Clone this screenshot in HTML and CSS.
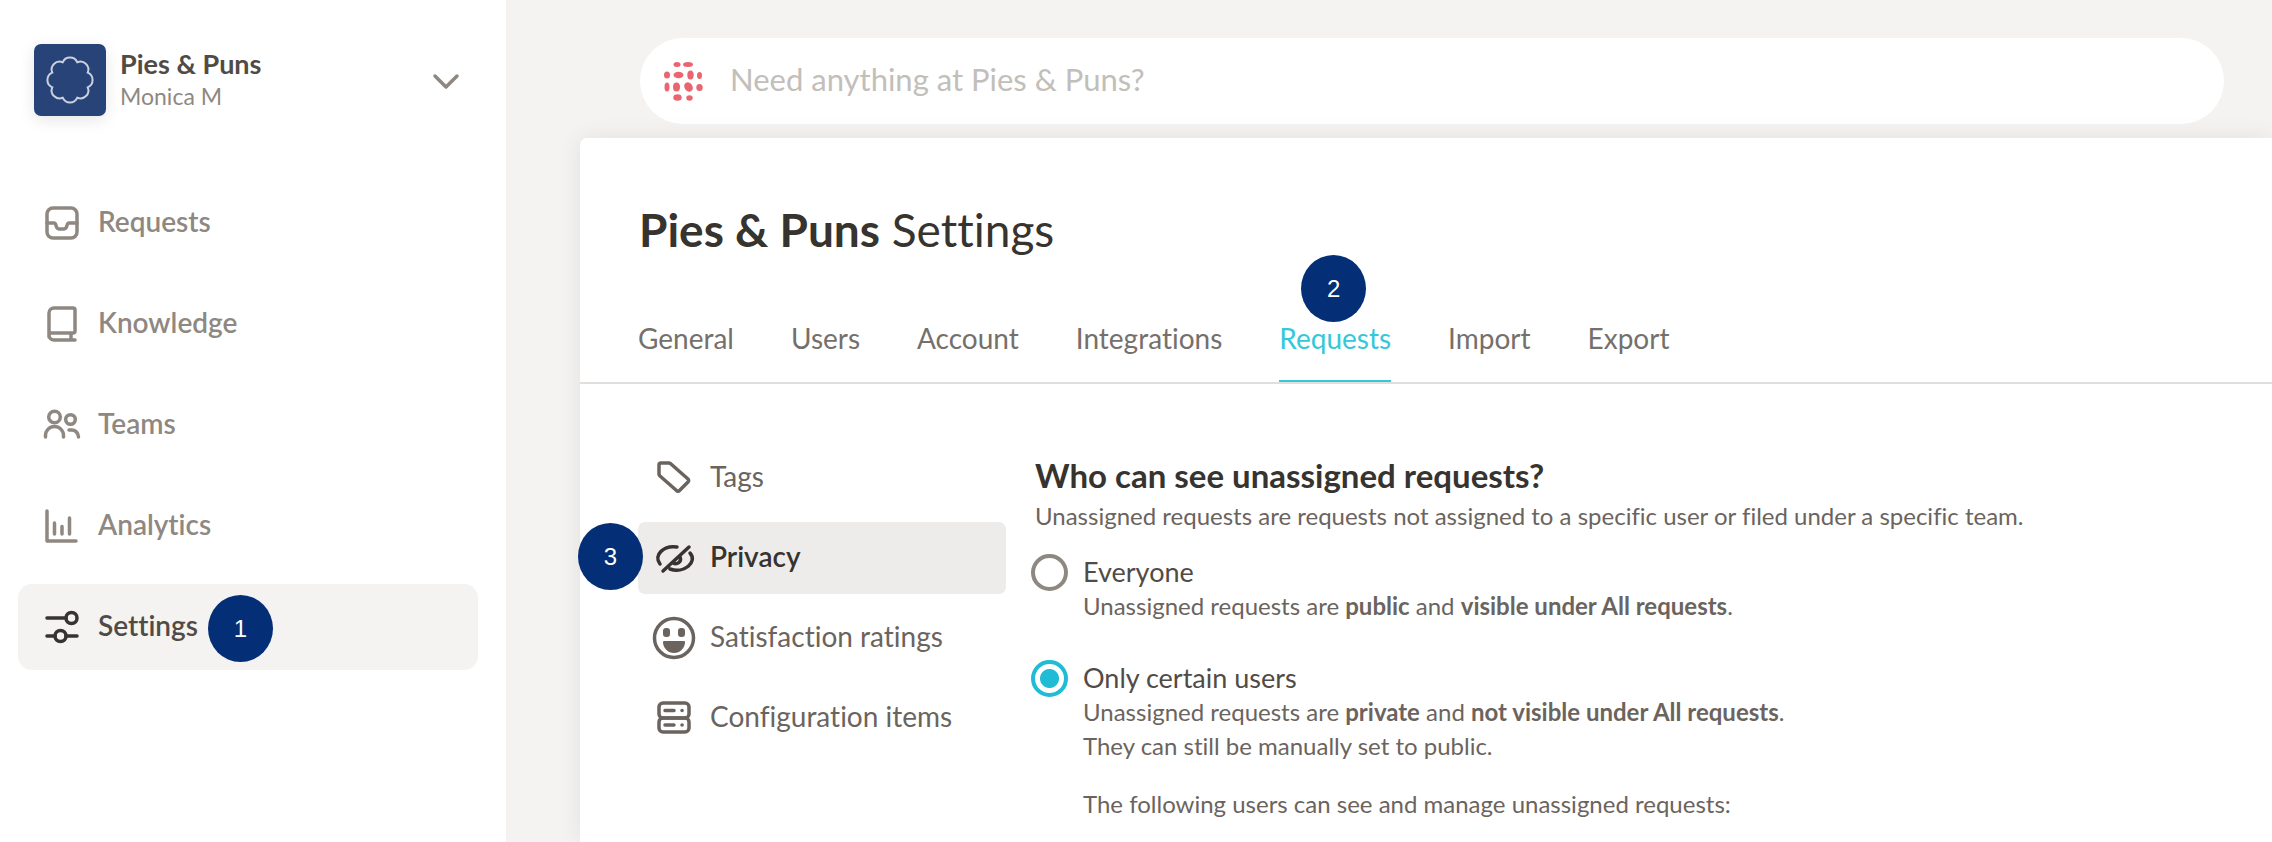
FILE: index.html
```html
<!DOCTYPE html>
<html lang="en">
<head>
  <meta charset="UTF-8">
  <title>Pies &amp; Puns Settings</title>
  <link rel="stylesheet" href="styles.css">
</head>
<body>
  <div class="app">
    <aside class="sidebar">
      <button class="account" type="button">
        <svg class="account-logo" viewBox="0 0 72 72" fill="none" stroke="#c9d0de" stroke-width="2">
          <path d="M28.7 18.3a7.9 7.9 0 0 1 14.6 0a7.9 7.9 0 0 1 10.4 10.4a7.9 7.9 0 0 1 0 14.6a7.9 7.9 0 0 1-10.4 10.4a7.9 7.9 0 0 1-14.6 0a7.9 7.9 0 0 1-10.4-10.4a7.9 7.9 0 0 1 0-14.6a7.9 7.9 0 0 1 10.4-10.4z"/>
        </svg>
        <span class="account-text">
          <span class="account-name">Pies &amp; Puns</span>
          <span class="account-user">Monica M</span>
        </span>
        <svg class="chevron" viewBox="0 0 28 18" fill="none" stroke="#8f8881" stroke-width="3.500" stroke-linecap="round" stroke-linejoin="round">
          <path d="M3 3l11 11L25 3"/>
        </svg>
      </button>

      <nav class="main-nav">
        <a class="nav-item" href="#">
          <svg class="nav-icon" viewBox="0 0 40 40">
            <rect x="5" y="5" width="30" height="30" rx="6"/>
            <path d="M5 20h7c3 0 1 6 5 6h5c4 0 2-6 5-6h8"/>
          </svg>
          <span class="nav-label">Requests</span>
        </a>
        <a class="nav-item" href="#">
          <svg class="nav-icon" viewBox="0 0 40 40">
            <path d="M7 33V9a5 5 0 0 1 5-5h19a2 2 0 0 1 2 2v21a2 2 0 0 1-2 2H9a2 2 0 0 0-2 2a5 5 0 0 0 5 5h21M29 29v7"/>
          </svg>
          <span class="nav-label">Knowledge</span>
        </a>
        <a class="nav-item" href="#">
          <svg class="nav-icon" viewBox="0 0 40 40">
            <circle cx="12.500" cy="12" r="5.800"/>
            <circle cx="28.500" cy="14.500" r="4.800"/>
            <path d="M3.500 32v-1.500a9 9 0 0 1 18 0V32M27 25h2a7 7 0 0 1 7.500 7"/>
          </svg>
          <span class="nav-label">Teams</span>
        </a>
        <a class="nav-item" href="#">
          <svg class="nav-icon" viewBox="0 0 40 40">
            <path d="M5 5v30h29M12.500 17v11M20 20.500V28M27.500 12v16"/>
          </svg>
          <span class="nav-label">Analytics</span>
        </a>
        <a class="nav-item active" href="#">
          <svg class="nav-icon" viewBox="0 0 40 40">
            <circle cx="29.500" cy="11" r="5.500"/>
            <circle cx="18.500" cy="29" r="5.500"/>
            <path d="M5 11h19M5 29h8M24 29h11"/>
          </svg>
          <span class="nav-label">Settings</span>
          <span class="badge badge-nav">1</span>
        </a>
      </nav>
    </aside>

    <main class="main">
      <label class="search">
        <svg class="search-logo" viewBox="0 0 40 40" fill="#e9656f">
          <ellipse cx="14" cy="3.500" rx="3.500" ry="2.500"/>
          <ellipse cx="25" cy="3.500" rx="5" ry="2.500"/>
          <ellipse cx="4" cy="14" rx="3" ry="3.500"/>
          <ellipse cx="15.500" cy="14" rx="5" ry="3.200"/>
          <ellipse cx="27.500" cy="14" rx="3.200" ry="4.500"/>
          <ellipse cx="36.500" cy="14.500" rx="2.500" ry="3.500"/>
          <ellipse cx="4" cy="26" rx="2.500" ry="4.500"/>
          <ellipse cx="13.500" cy="26" rx="3.500" ry="4.500"/>
          <ellipse cx="25.500" cy="26" rx="4" ry="5" transform="rotate(-35 25.500 26)"/>
          <ellipse cx="36.500" cy="26.500" rx="3.200" ry="3.500"/>
          <ellipse cx="14.500" cy="36.500" rx="4.200" ry="3.200"/>
          <ellipse cx="26.500" cy="37" rx="3.200" ry="2.800"/>
        </svg>
        <input class="search-input" type="text" placeholder="Need anything at Pies &amp; Puns?" aria-label="Search">
      </label>

      <section class="panel">
        <h1 class="title"><strong>Pies &amp; Puns</strong> Settings</h1>

        <nav class="tabs">
          <a class="tab" href="#">General</a>
          <a class="tab" href="#">Users</a>
          <a class="tab" href="#">Account</a>
          <a class="tab" href="#">Integrations</a>
          <a class="tab active" href="#">Requests<span class="badge badge-tab">2</span></a>
          <a class="tab" href="#">Import</a>
          <a class="tab" href="#">Export</a>
        </nav>

        <div class="panel-body">
          <nav class="sub-nav">
            <a class="sub-item" href="#">
              <svg class="sub-icon" viewBox="0 0 44 44">
                <path d="M9 7h8a3 3 0 0 1 2 1l17 15a2 2 0 0 1 0 3l-8.500 8.500a2 2 0 0 1-3 0L8 20a3 3 0 0 1-1-2V9a2 2 0 0 1 2-2z"/>
              </svg>
              <span class="nav-label">Tags</span>
            </a>
            <a class="sub-item active" href="#">
              <svg class="sub-icon" viewBox="0 0 44 44">
                <path d="M8 28C1 19 12 9 25 11M37 11L11 35M38 17c8 9-6 21-20 16M28 21c2 5-3 8-7 6"/>
              </svg>
              <span class="nav-label">Privacy</span>
              <span class="badge badge-sub">3</span>
            </a>
            <a class="sub-item" href="#">
              <svg class="sub-icon" viewBox="0 0 44 44">
                <circle cx="22" cy="22" r="19.500"/>
                <rect class="fill" x="11" y="12" width="7" height="9" rx="3"/>
                <rect class="fill" x="26" y="12" width="7" height="9" rx="3"/>
                <path class="fill" d="M12 25h20a1 1 0 0 1 1 1a11 11 0 0 1-22 0a1 1 0 0 1 1-1z"/>
              </svg>
              <span class="nav-label">Satisfaction ratings</span>
            </a>
            <a class="sub-item" href="#">
              <svg class="sub-icon" viewBox="0 0 44 44">
                <rect x="7" y="7" width="30" height="15" rx="4"/>
                <rect x="7" y="22" width="30" height="14" rx="4"/>
                <path d="M13 14.500h9M13 29h9M30 14.500h.1M30 29h.1"/>
              </svg>
              <span class="nav-label">Configuration items</span>
            </a>
          </nav>

          <form class="content">
            <h2 class="heading">Who can see unassigned requests?</h2>
            <p class="text">Unassigned requests are requests not assigned to a specific user or filed under a specific team.</p>

            <div class="option">
              <input class="radio" type="radio" name="visibility" id="everyone">
              <div class="option-text">
                <label class="option-label" for="everyone">Everyone</label>
                <p class="text">Unassigned requests are <b>public</b> and <b>visible under All requests</b>.</p>
              </div>
            </div>

            <div class="option">
              <input class="radio" type="radio" name="visibility" id="certain" checked>
              <div class="option-text">
                <label class="option-label" for="certain">Only certain users</label>
                <p class="text">Unassigned requests are <b>private</b> and <b>not visible under All requests</b>.<br>They can still be manually set to public.</p>
                <p class="text note">The following users can see and manage unassigned requests:</p>
              </div>
            </div>
          </form>
        </div>
      </section>
    </main>
  </div>
</body>
</html>
```
FILE: styles.css
```css
* {
  box-sizing: border-box;
}

body {
  margin: 0;
  font-family: Lato, "Open Sans", sans-serif;
  font-size: 28px;
  font-variant-ligatures: none;
  color: #6b645e;
  background: #f4f3f2;
}

a {
  color: inherit;
  text-decoration: none;
}

h1, h2, p {
  margin: 0;
}

.app {
  display: flex;
  height: 100vh;
  overflow: hidden;
}

/* sidebar */
.sidebar {
  flex: 0 0 506px;
  padding: 44px 28px 0 18px;
  background: #fff;
}

.account {
  display: flex;
  align-items: center;
  width: 100%;
  padding: 0 18px 0 16px;
  border: 0;
  background: none;
  font-family: inherit;
  text-align: left;
  cursor: pointer;
}

.account-logo {
  width: 72px;
  height: 72px;
  margin-right: 14px;
  border-radius: 7px;
  background: #284377;
  box-shadow: 0 4px 16px rgba(0, 0, 0, 0.1);
}

.account-text {
  display: flex;
  flex: 1;
  flex-direction: column;
}

.account-name {
  font-size: 27px;
  line-height: 32px;
  font-weight: 700;
  color: #514b46;
}

.account-user {
  font-size: 23px;
  line-height: 32px;
  color: #8f8881;
}

.chevron {
  width: 28px;
  height: 18px;
  margin-top: 3px;
}

.main-nav {
  display: flex;
  flex-direction: column;
  gap: 15px;
  margin-top: 64px;
}

.nav-item {
  position: relative;
  display: flex;
  align-items: center;
  gap: 16px;
  height: 86px;
  padding-left: 24px;
  border-radius: 14px;
  font-weight: 600;
  color: #8f8881;
}

.nav-item.active {
  background: #f4f3f2;
  color: #514b46;
}

.nav-label {
  padding-bottom: 5px;
}

.nav-icon {
  width: 40px;
  height: 40px;
}

.nav-icon,
.sub-icon {
  flex: none;
  fill: none;
  stroke: currentColor;
  stroke-width: 3.5;
  stroke-linecap: round;
  stroke-linejoin: round;
}

.active .nav-icon {
  color: #37332f;
}

/* numbered markers */
.badge {
  position: absolute;
  display: flex;
  align-items: center;
  justify-content: center;
  width: 65px;
  height: 67px;
  border-radius: 50%;
  background: #042e76;
  color: #fff;
  font: 24px "Liberation Sans", Arial, sans-serif;
}

.badge-nav {
  top: 11px;
  left: 190px;
}

.badge-tab {
  bottom: 58px;
  left: 22px;
}

.badge-sub {
  top: 1px;
  left: -60px;
}

/* main area */
.main {
  display: flex;
  flex: 1;
  flex-direction: column;
  min-width: 0;
  padding: 38px 0 0 74px;
}

.search {
  display: flex;
  align-items: center;
  gap: 27px;
  flex: none;
  height: 86px;
  margin: 0 48px 14px 60px;
  padding: 0 23px;
  border-radius: 43px;
  background: #fff;
}

.search-logo {
  width: 40px;
  height: 40px;
}

.search-input {
  flex: 1;
  padding: 0 0 4px;
  border: 0;
  outline: 0;
  background: none;
  font-family: inherit;
  font-size: 31px;
  color: #514b46;
}

.search-input::placeholder {
  color: #c2beba;
}

.panel {
  flex: 1;
  border-top-left-radius: 7px;
  background: #fff;
  box-shadow: 0 0 24px rgba(0, 0, 0, 0.08);
}

.title {
  padding: 64px 0 0 59px;
  font-size: 46px;
  line-height: 56px;
  font-weight: 400;
  color: #37332f;
}

.tabs {
  display: flex;
  gap: 57px;
  margin-top: 54px;
  padding-left: 58px;
  border-bottom: 2px solid #e2dedb;
}

.tab {
  position: relative;
  height: 70px;
  padding-top: 9px;
  line-height: 34px;
  color: #75706b;
}

.tab.active {
  border-bottom: 2px solid #35c8da;
  color: #35c8da;
}

.panel-body {
  display: flex;
  padding: 58px 40px 0 58px;
}

.sub-nav {
  display: flex;
  flex: 0 0 368px;
  flex-direction: column;
  gap: 8px;
  margin-right: 25px;
}

.sub-item {
  position: relative;
  display: flex;
  align-items: center;
  gap: 14px;
  height: 72px;
  padding-left: 14px;
  border-radius: 7px;
}

.sub-item.active {
  background: #eeeceb;
  font-weight: 600;
  color: #37332f;
}

.sub-icon {
  width: 44px;
  height: 44px;
}

.sub-icon .fill {
  fill: currentColor;
  stroke: none;
}

/* request visibility form */
.content {
  flex: 1;
  padding-top: 11px;
}

.heading {
  padding-left: 4px;
  font-size: 33px;
  line-height: 44px;
  color: #37332f;
}

.text {
  font-size: 24px;
  line-height: 34px;
}

.content > .text {
  padding: 2px 0 0 4px;
}

.option {
  display: flex;
  gap: 15px;
  margin-top: 18px;
}

.option + .option {
  margin-top: 34px;
}

.radio {
  flex: none;
  width: 37px;
  height: 37px;
  margin: 3px 0 0;
  appearance: none;
  border: 4px solid #8f8881;
  border-radius: 50%;
}

.radio:checked {
  border-color: #20bcd5;
  background: radial-gradient(circle, #20bcd5 9px, #fff 10px);
}

.option-text {
  padding-top: 4px;
}

.option-label {
  display: block;
  font-size: 27px;
  line-height: 34px;
  color: #514b46;
}

.note {
  margin-top: 24px;
}
```
